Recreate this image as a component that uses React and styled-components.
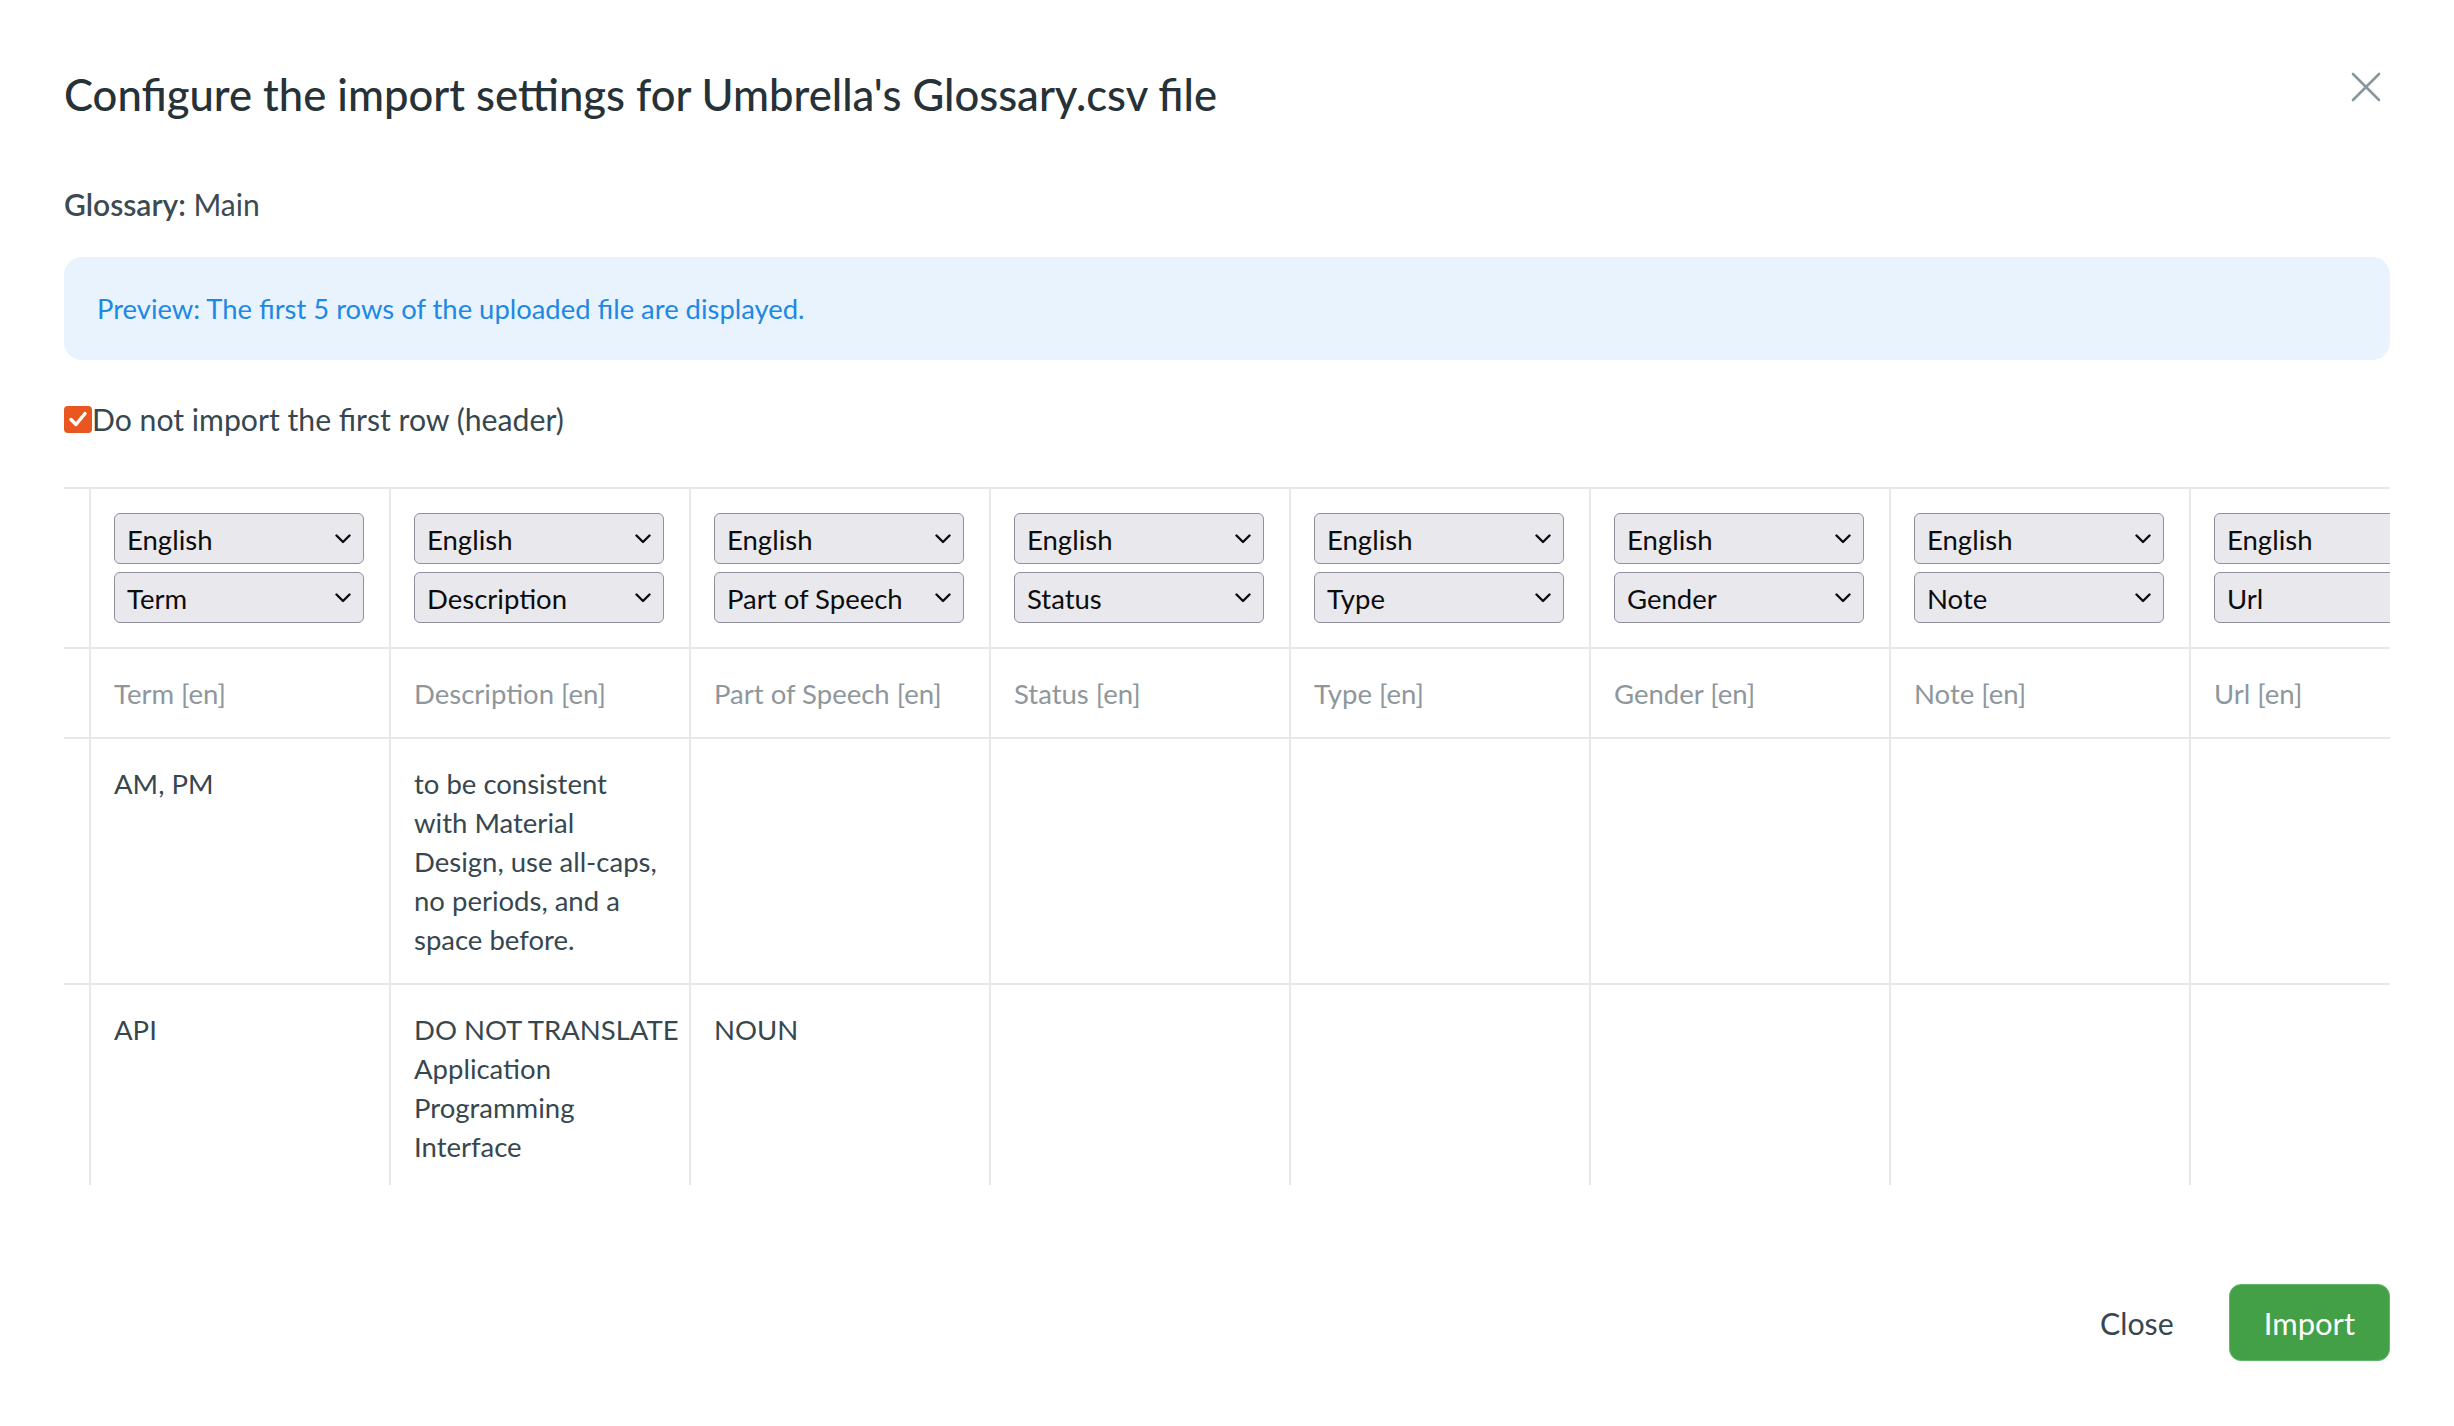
import React from "react";
import styled, { createGlobalStyle } from "styled-components";

const GlobalStyle = createGlobalStyle`
  html, body { margin: 0; padding: 0; background: #ffffff; }
  body { font-family: Lato, "Liberation Sans", sans-serif; color: #37474f; }
  *, *::before, *::after { box-sizing: border-box; }
`;

const Modal = styled.div`
  width: 2454px;
  height: 1426px;
  padding: 0 64px;
  display: flex;
  flex-direction: column;
  overflow: hidden;
  background: #fff;
`;

const Header = styled.header`
  display: flex;
  align-items: flex-start;
  justify-content: space-between;
  padding-top: 68px;
`;

const Title = styled.h1`
  margin: 0;
  font-size: 43.6px;
  line-height: 52px;
  font-weight: 500;
  color: #263238;
`;

const CloseX = styled.button`
  border: 0;
  background: none;
  padding: 0;
  margin: 4px 9px 0 0;
  width: 30px;
  height: 30px;
  display: flex;
  cursor: pointer;
`;

const GlossaryLine = styled.p`
  margin: 64px 0 0;
  font-size: 30px;
  line-height: 40px;
  color: #3c4a52;
`;

const Strong = styled.span`
  font-weight: 600;
`;

const Alert = styled.div`
  margin-top: 33px;
  padding: 32px 33px;
  background: #e8f3fd;
  border-radius: 18px;
  color: #1e88e5;
  font-size: 27.4px;
  line-height: 39px;
`;

const CheckRow = styled.label`
  margin-top: 39px;
  height: 40px;
  display: flex;
  align-items: center;
  font-size: 30.2px;
  color: #37474f;
  cursor: pointer;
`;

const HiddenInput = styled.input`
  position: absolute;
  opacity: 0;
  width: 0;
  height: 0;
`;

const CheckBox = styled.span`
  width: 28px;
  height: 27px;
  border-radius: 4px;
  background: #e9561f;
  display: flex;
  align-items: center;
  justify-content: center;
  flex: none;
`;

const TableWrap = styled.div`
  margin-top: 48px;
  height: 698px;
  width: 100%;
  overflow: hidden;
`;

const Grid = styled.div`
  display: grid;
  grid-template-columns: 25px repeat(8, 300px);
  width: max-content;
`;

const Cell = styled.div`
  border-top: 2px solid #e8e8e8;
  border-left: ${(p) => (p.$first ? "none" : "2px solid #e8e8e8")};
  padding: ${(p) => (p.$first ? "0" : "25px 25px 24px 23px")};
  font-size: 27.5px;
  line-height: 39px;
  color: ${(p) => (p.$muted ? "#8e979c" : "#37474f")};
  white-space: pre;
`;

const SelectStack = styled.div`
  display: flex;
  flex-direction: column;
  gap: 8px;
  margin-top: -1px;
`;

const SelectWrap = styled.div`
  position: relative;
  width: 100%;
`;

const Select = styled.select`
  appearance: none;
  -webkit-appearance: none;
  width: 100%;
  height: 51px;
  margin: 0;
  padding: 2px 40px 0 12px;
  font-family: inherit;
  font-size: 27.5px;
  color: #0c0c0d;
  background: #e9e9ed;
  border: 1.5px solid #8f8f9d;
  border-radius: 6px;
  outline: none;
`;

const Chevron = styled.svg`
  position: absolute;
  right: 13px;
  top: 50%;
  transform: translateY(-50%);
  pointer-events: none;
`;

const Footer = styled.footer`
  margin-top: 99px;
  display: flex;
  justify-content: flex-end;
  gap: 20px;
`;

const Button = styled.button`
  height: 77px;
  padding: 0 34px;
  font-family: inherit;
  font-size: ${(p) => (p.$primary ? "31px" : "30.3px")};
  border-radius: 12px;
  cursor: pointer;
  border: 1.5px solid ${(p) => (p.$primary ? "#63b867" : "transparent")};
  background: ${(p) => (p.$primary ? "#43a047" : "transparent")};
  color: ${(p) => (p.$primary ? "#ffffff" : "#37474f")};
`;

const fields = ["Term", "Description", "Part of Speech", "Status", "Type", "Gender", "Note", "Url"];

const rows = [
  [
    "AM, PM",
    "to be consistent\nwith Material\nDesign, use all-caps,\nno periods, and a\nspace before.",
    "",
    "",
    "",
    "",
    "",
    "",
  ],
  ["API", "DO NOT TRANSLATE\nApplication\nProgramming\nInterface", "NOUN", "", "", "", "", ""],
];

function DropDown({ value, options }) {
  return (
    <SelectWrap>
      <Select defaultValue={value}>
        {options.map((o) => (
          <option key={o} value={o}>
            {o}
          </option>
        ))}
      </Select>
      <Chevron width="16" height="10" viewBox="0 0 16 10">
        <path d="M1.5 1.5 L8 8 L14.5 1.5" fill="none" stroke="#0c0c0d" strokeWidth="2.4" strokeLinecap="round" strokeLinejoin="round" />
      </Chevron>
    </SelectWrap>
  );
}

export default function App() {
  return (
    <>
      <GlobalStyle />
      <Modal>
        <Header>
          <Title>Configure the import settings for Umbrella's Glossary.csv file</Title>
          <CloseX aria-label="Close">
            <svg width="30" height="30" viewBox="0 0 30 30">
              <path d="M2 2 L28 28 M28 2 L2 28" stroke="#8a969d" strokeWidth="2.6" strokeLinecap="round" />
            </svg>
          </CloseX>
        </Header>
        <GlossaryLine>
          <Strong>Glossary:</Strong> Main
        </GlossaryLine>
        <Alert>Preview: The first 5 rows of the uploaded file are displayed.</Alert>
        <CheckRow>
          <HiddenInput type="checkbox" defaultChecked />
          <CheckBox>
            <svg width="20" height="18" viewBox="0 0 20 18">
              <path d="M3 9.5 L8 14.5 L17 3.5" fill="none" stroke="#fff" strokeWidth="3.4" strokeLinecap="round" strokeLinejoin="round" />
            </svg>
          </CheckBox>
          Do not import the first row (header)
        </CheckRow>
        <TableWrap>
          <Grid>
            <Cell $first />
            {fields.map((f) => (
              <Cell key={"s" + f}>
                <SelectStack>
                  <DropDown value="English" options={["English", "German", "French"]} />
                  <DropDown value={f} options={fields} />
                </SelectStack>
              </Cell>
            ))}
            <Cell $first />
            {fields.map((f) => (
              <Cell key={"h" + f} $muted>
                {f} [en]
              </Cell>
            ))}
            {rows.map((r, i) => (
              <React.Fragment key={i}>
                <Cell $first />
                {r.map((v, j) => (
                  <Cell key={j}>{v}</Cell>
                ))}
              </React.Fragment>
            ))}
          </Grid>
        </TableWrap>
        <Footer>
          <Button>Close</Button>
          <Button $primary>Import</Button>
        </Footer>
      </Modal>
    </>
  );
}
